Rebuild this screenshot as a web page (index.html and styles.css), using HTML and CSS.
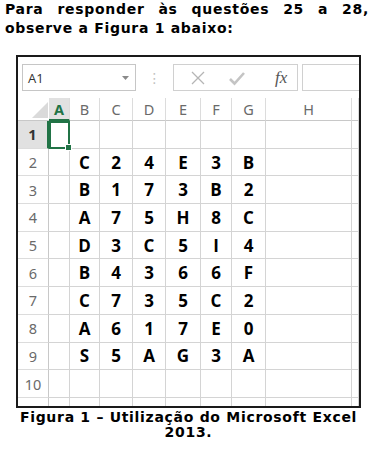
FILE: index.html
```html
<!DOCTYPE html>
<html lang="pt-BR">
<head>
  <meta charset="UTF-8">
  <title>Figura 1 - Excel 2013</title>
  <link rel="stylesheet" href="styles.css">
</head>
<body>
  <div class="page">
    <p class="intro"><span class="line">Para responder às questões 25 a 28,</span> observe a Figura 1 abaixo:</p>

    <div class="frame">
      <div class="toolbar">
        <div class="namebox">
          <span>A1</span>
          <svg class="arrow" width="7" height="4" viewBox="0 0 7 4"><path d="M0 0h7L3.5 4z" fill="#8a8a8a"/></svg>
        </div>
        <div class="dots">⋮</div>
        <div class="buttons">
          <svg width="16" height="16" viewBox="0 0 16 16"><path d="M2 2l12 12M14 2L2 14" stroke="#b5b5b5" stroke-width="1.3" fill="none"/></svg>
          <svg width="18" height="16" viewBox="0 0 18 16"><path d="M2 9l4.5 4.5L16 3" stroke="#c4c4c4" stroke-width="2.6" fill="none"/></svg>
          <span class="fx">fx</span>
        </div>
        <div class="formula"></div>
      </div>

      <div class="sheet">
        <div class="hd corner"></div>
        <div class="hd col sel">A</div>
        <div class="hd col">B</div>
        <div class="hd col">C</div>
        <div class="hd col">D</div>
        <div class="hd col">E</div>
        <div class="hd col">F</div>
        <div class="hd col">G</div>
        <div class="hd col">H</div>
        <div class="hd col"></div>
      </div>
      <div class="sheet" id="rows"></div>
    </div>

    <p class="caption">Figura 1 – Utilização do Microsoft Excel 2013.</p>
  </div>

  <script>
    var data = [
      [],
      ['C', '2', '4', 'E', '3', 'B'],
      ['B', '1', '7', '3', 'B', '2'],
      ['A', '7', '5', 'H', '8', 'C'],
      ['D', '3', 'C', '5', 'I', '4'],
      ['B', '4', '3', '6', '6', 'F'],
      ['C', '7', '3', '5', 'C', '2'],
      ['A', '6', '1', '7', 'E', '0'],
      ['S', '5', 'A', 'G', '3', 'A'],
      []
    ];
    var rows = document.getElementById('rows');
    var html = '';
    data.forEach(function(row, i) {
      html += '<div class="hd num' + (i === 0 ? ' sel' : '') + '">' + (i + 1) + '</div>';
      html += '<div class="cell' + (i === 0 ? ' active' : '') + '"></div>';
      for (var c = 0; c < 6; c++) {
        html += '<div class="cell">' + (row[c] || '') + '</div>';
      }
      html += '<div class="cell"></div><div class="cell"></div>';
    });
    // partly hidden row 11 below the frame edge
    html += '<div class="hd num"></div>';
    for (var k = 0; k < 9; k++) html += '<div class="cell"></div>';
    rows.innerHTML = html;
  </script>
</body>
</html>
```

FILE: styles.css
```css
body {
  margin: 0;
  background: #fff;
  color: #000;
}
.page {
  width: 364px;
  margin-left: 5px;
  font-family: "DejaVu Sans", Verdana, sans-serif;
  font-weight: bold;
  letter-spacing: 0.7px;
}
.intro {
  margin: 0;
  font-size: 14px;
  line-height: 19px;
  text-align: justify;
}
.intro .line {
  display: block;
  text-align-last: justify;
}
.frame {
  width: 341px;
  height: 349px;
  margin: 17px 0 0 11px;
  border: 2px solid #1a1a1a;
  overflow: hidden;
  font-weight: normal;
  letter-spacing: normal;
  background: #fff;
}
.toolbar {
  display: flex;
  align-items: center;
  height: 41px;
  padding: 0 0 0 4px;
}
.namebox {
  display: flex;
  align-items: center;
  justify-content: space-between;
  padding: 0 6px 0 5px;
  box-sizing: border-box;
  width: 114px;
  height: 27px;
  border: 1px solid #c6c6c6;
  font-family: "Open Sans", sans-serif;
  font-size: 13px;
  color: #333;
}
.arrow {
  margin-top: 1px;
}
.dots {
  width: 37px;
  text-align: center;
  color: #c2c2c2;
  font-size: 14px;
  font-family: "DejaVu Sans", sans-serif;
}
.buttons {
  width: 125px;
  height: 27px;
  box-sizing: border-box;
  border: 1px solid #d0d0d0;
  display: flex;
  align-items: center;
  padding-left: 16px;
  gap: 22px;
}
.fx {
  font-family: "Liberation Serif", serif;
  font-style: italic;
  font-size: 17px;
  color: #555;
  margin-left: 7px;
}
.formula {
  flex: 1;
  height: 27px;
  box-sizing: border-box;
  border: 1px solid #d0d0d0;
  border-right: none;
  margin-left: 4px;
}
.sheet {
  display: grid;
  grid-template-columns: 31px 21px 30px 33px 33px 35px 31px 34px 86px 1fr;
}
#rows {
  grid-auto-rows: 27.7px;
}
.hd {
  height: 23px;
  box-sizing: border-box;
  border-right: 1px solid #dcdcdc;
  border-bottom: 1px solid #c8c8c8;
  display: flex;
  align-items: center;
  justify-content: center;
  font-family: "Noto Sans", sans-serif;
  font-size: 14.5px;
  color: #6a6a6a;
}
.corner {
  position: relative;
  border-right: none;
}
.corner::after {
  content: "";
  position: absolute;
  right: 1px;
  bottom: 2px;
  border-style: solid;
  border-width: 0 0 16px 16px;
  border-color: transparent transparent #dadada transparent;
}
.col.sel {
  background: #e1e1e1;
  color: #217346;
  font-weight: bold;
  border-bottom: 2px solid #217346;
}
.num {
  height: auto;
  border-bottom: 1px solid #dcdcdc;
  border-right: 1px solid #c8c8c8;
}
.num.sel {
  background: #e1e1e1;
  color: #333;
  font-weight: bold;
  border-right: 2px solid #217346;
}
.cell {
  box-sizing: border-box;
  border-right: 1px solid #d4d4d4;
  border-bottom: 1px solid #d4d4d4;
  display: flex;
  align-items: center;
  justify-content: center;
  font-family: "Open Sans", sans-serif;
  font-weight: bold;
  font-size: 17px;
  color: #000;
}
.cell.active {
  position: relative;
  border: 2px solid #217346;
}
.cell.active::after {
  content: "";
  position: absolute;
  right: -4px;
  bottom: -4px;
  width: 5px;
  height: 5px;
  background: #217346;
  border: 1px solid #fff;
}
.caption {
  width: 345px;
  margin: 2px 0 0 11px;
  font-size: 14px;
  line-height: 15px;
  text-align: center;
}
```
